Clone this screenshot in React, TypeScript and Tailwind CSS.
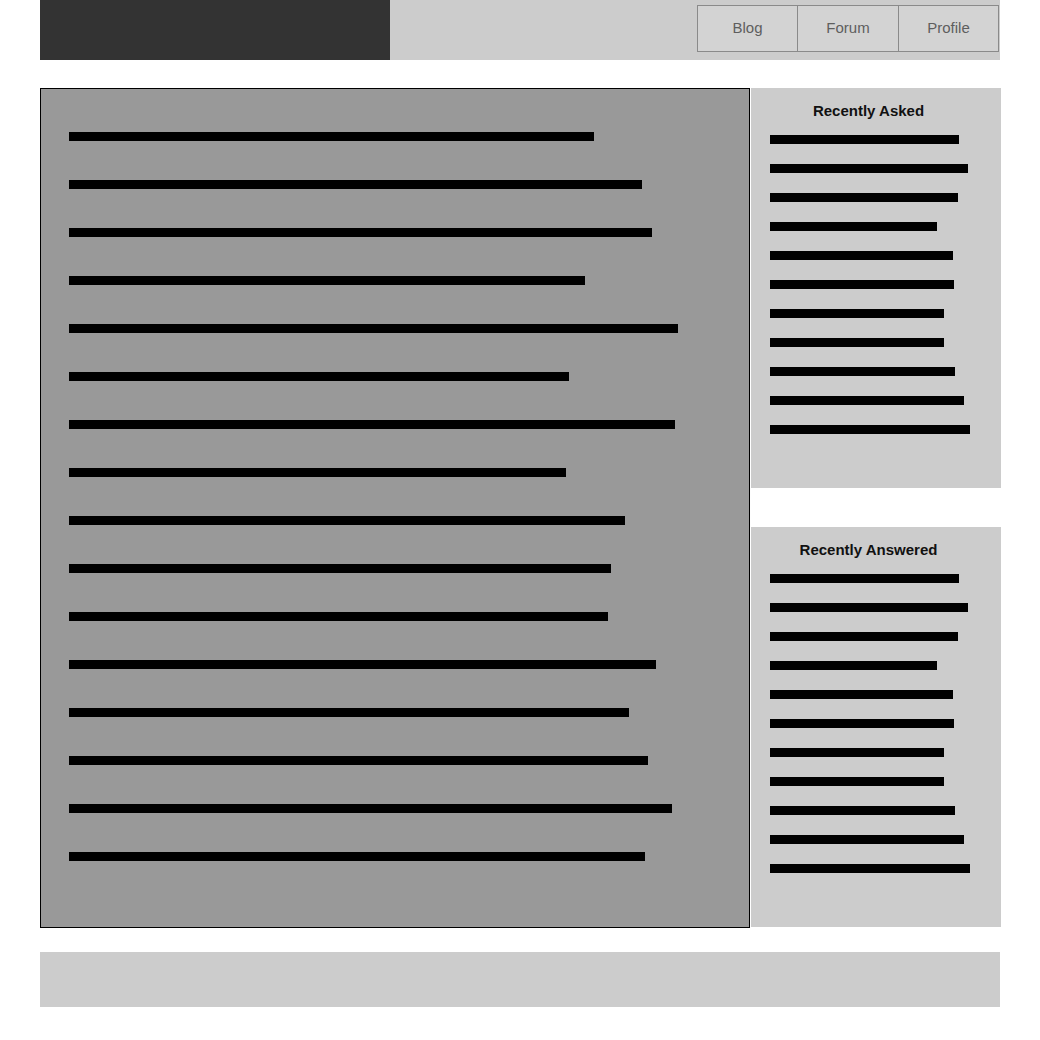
import React from "react";

const mainWidths = [594, 642, 652, 585, 678, 569, 675, 566, 625, 611, 608, 656, 629, 648, 672, 645].map((e) => e - 69);
const sideWidths = [959, 968, 958, 937, 953, 954, 944, 944, 955, 964, 970].map((e) => e - 770);

function SidePanel({ title }: { title: string }) {
  return (
    <div className="h-[400px] w-[250px] bg-[#cccccc] pt-[14px]">
      <div className="pr-[15px] text-center text-[15px] font-bold leading-[18px] text-[#111]" style={{ fontFamily: '"Liberation Sans", Arial, sans-serif' }}>
        {title}
      </div>
      <div className="mt-[15px] flex flex-col gap-[20px] pl-[19px]">
        {sideWidths.map((w, i) => (
          <div key={i} className="h-[9px] bg-black" style={{ width: w }} />
        ))}
      </div>
    </div>
  );
}

export default function App() {
  const font = { fontFamily: '"Liberation Sans", Arial, Helvetica, sans-serif' };
  const navW = ["w-[101px]", "w-[102px]", "w-[101px]"];
  return (
    <div className="min-h-[1040px] w-[1040px] bg-white" style={font}>
      <div className="mx-[40px] w-[960px]">
        <header className="flex h-[60px] bg-[#cccccc]">
          <div className="h-full w-[350px] bg-[#333333]" />
          <div className="flex flex-1 justify-end pr-px pt-[5px]">
            <nav className="flex h-[47px]">
              {["Blog", "Forum", "Profile"].map((t, i) => (
                <div
                  key={t}
                  className={`flex ${navW[i]} items-center justify-center border border-[#8a8a8a] bg-[#d3d3d3] text-[15px] text-[#5e5e5e] ${i > 0 ? "-ml-px" : ""}`}
                >
                  {t}
                </div>
              ))}
            </nav>
          </div>
        </header>

        <div className="mt-[28px] flex">
          <main className="h-[840px] w-[710px] shrink-0 border border-black bg-[#999999] pl-[28px] pt-[43px]">
            <div className="flex flex-col gap-[39px]">
              {mainWidths.map((w, i) => (
                <div key={i} className="h-[9px] bg-black" style={{ width: w }} />
              ))}
            </div>
          </main>
          <aside className="ml-px flex w-[250px] shrink-0 flex-col gap-[39px]">
            <SidePanel title="Recently Asked" />
            <SidePanel title="Recently Answered" />
          </aside>
        </div>

        <footer className="mt-[24px] h-[55px] bg-[#cccccc]" />
      </div>
    </div>
  );
}
